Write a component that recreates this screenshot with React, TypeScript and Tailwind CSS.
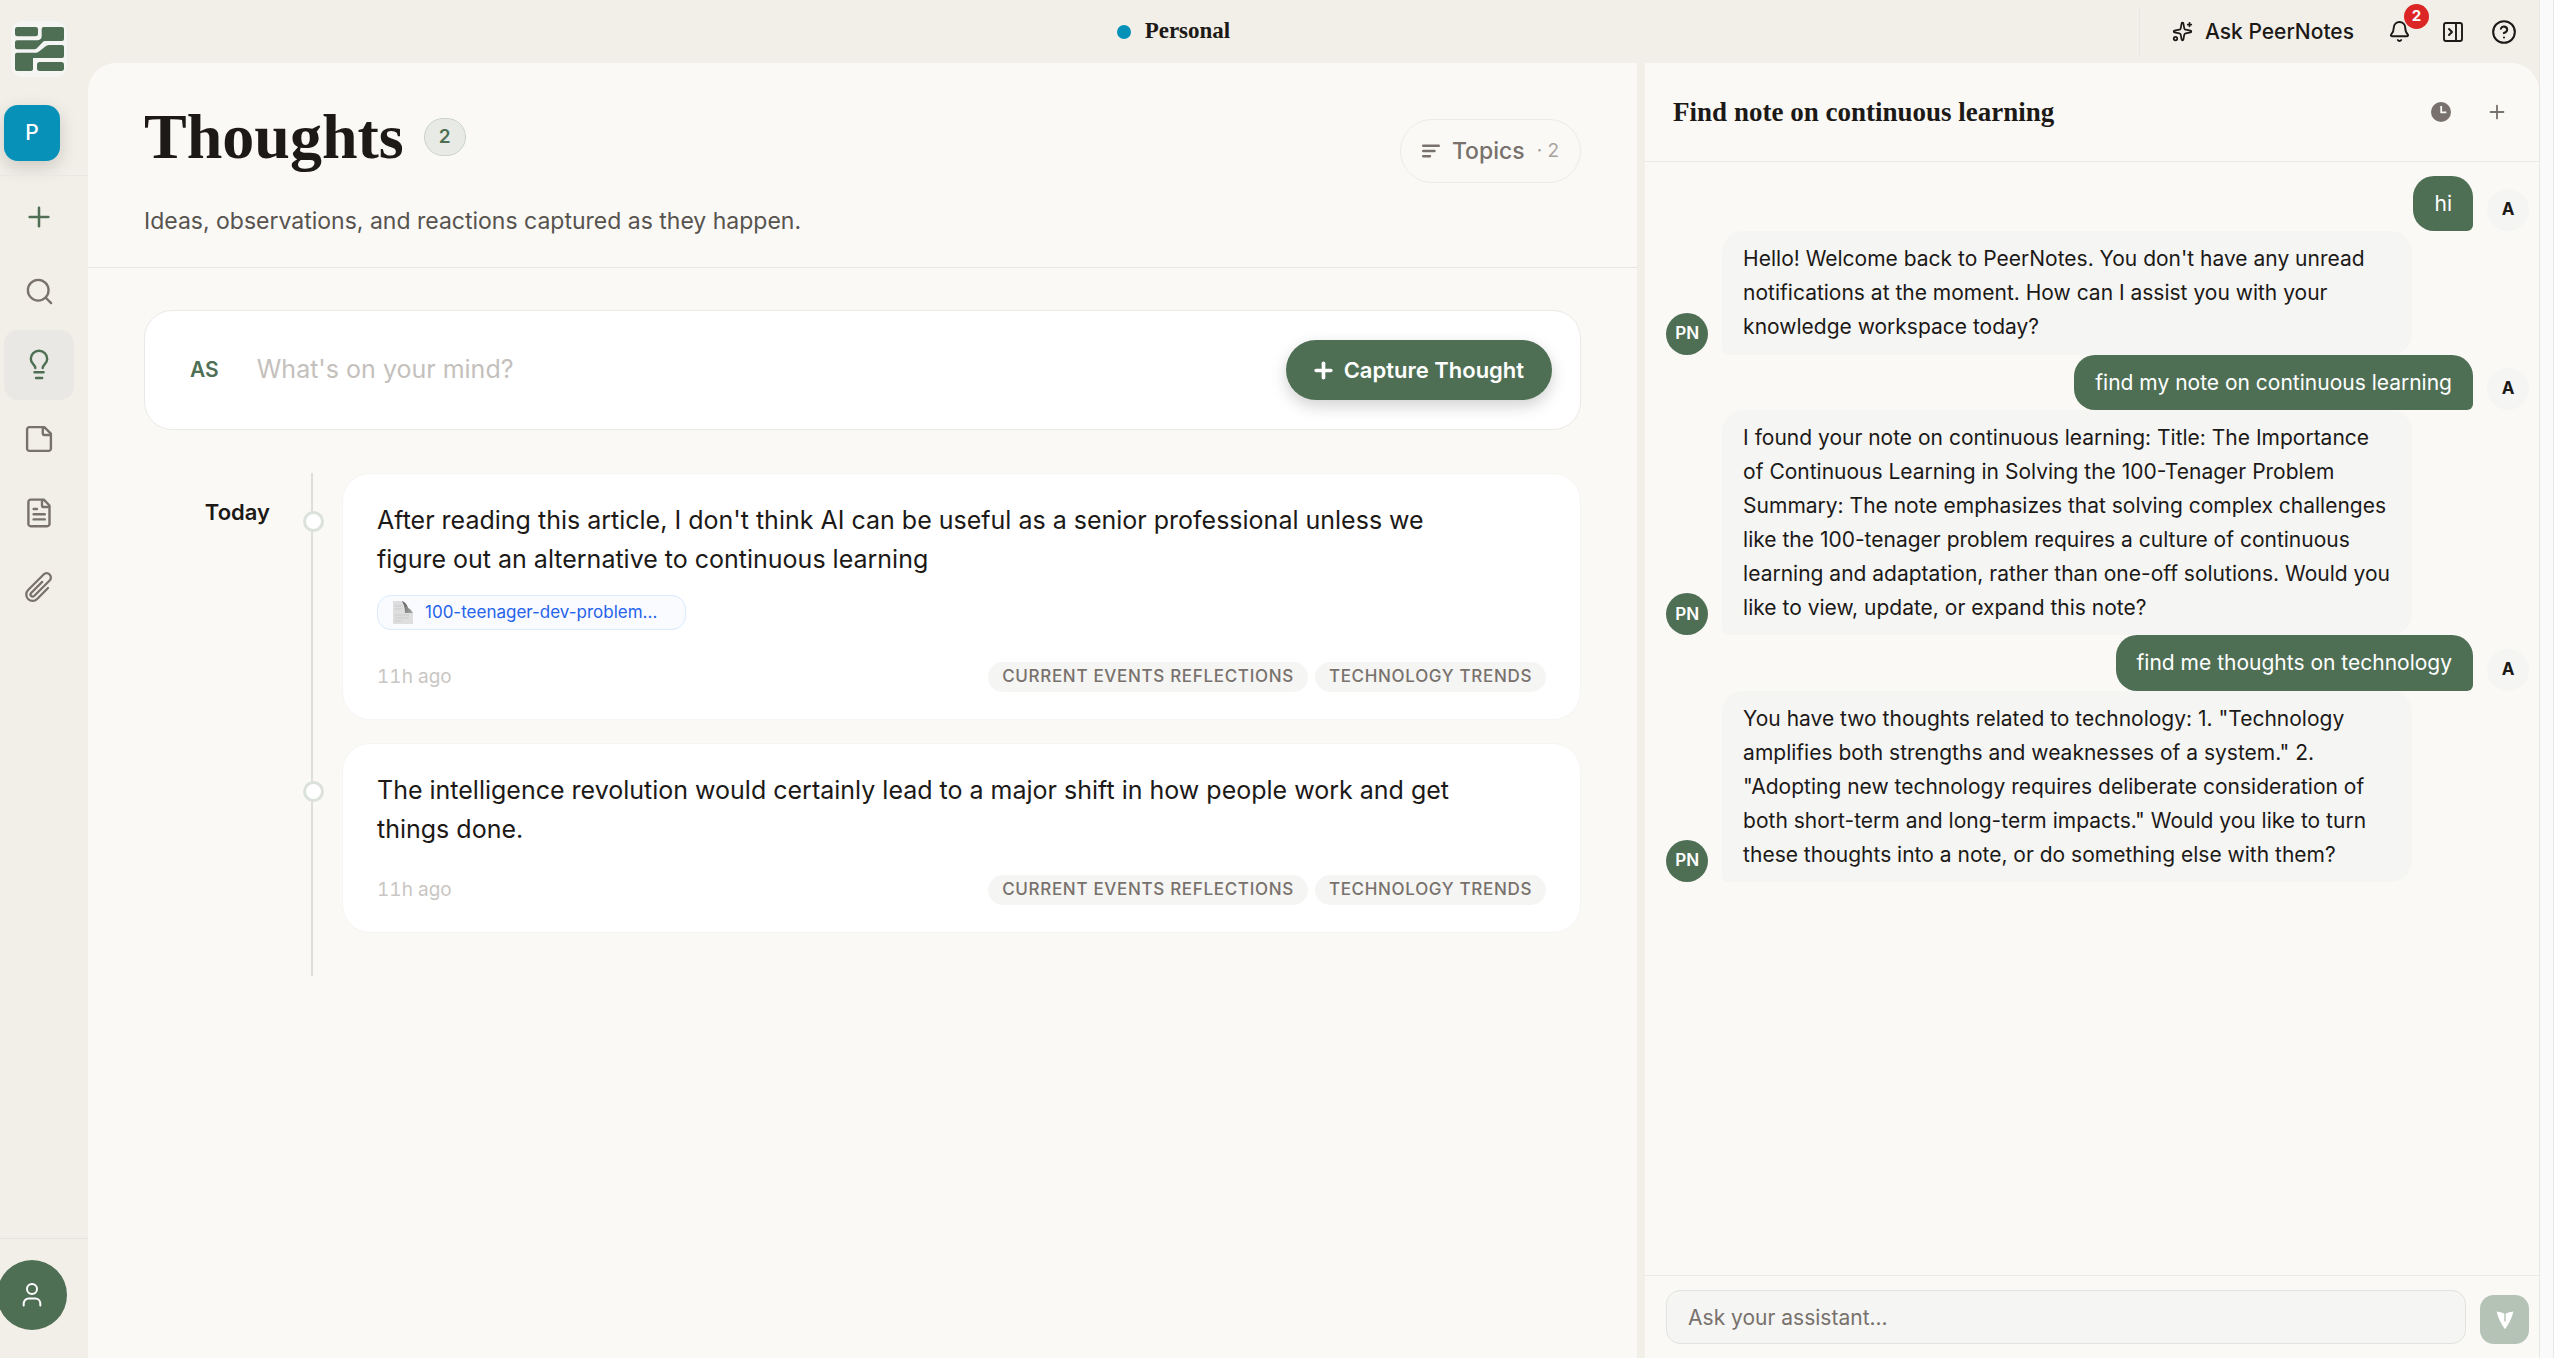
import { useState } from 'react';
import type { ReactNode } from 'react';
import { Bell, CircleHelp, PanelRightClose, Plus, Search, Sparkles } from 'lucide-react';
import clsx from 'clsx';

interface Thought {
  id: number;
  text: string;
  attachment?: string;
  time: string;
  topics: string[];
}

interface Message {
  id: number;
  from: 'user' | 'assistant';
  text: string;
}

const THOUGHTS: Thought[] = [
  {
    id: 1,
    text: "After reading this article, I don't think AI can be useful as a senior professional unless we figure out an alternative to continuous learning",
    attachment: '100-teenager-dev-problem...',
    time: '11h ago',
    topics: ['Current Events Reflections', 'Technology Trends'],
  },
  {
    id: 2,
    text: 'The intelligence revolution would certainly lead to a major shift in how people work and get things done.',
    time: '11h ago',
    topics: ['Current Events Reflections', 'Technology Trends'],
  },
];

const MESSAGES: Message[] = [
  { id: 1, from: 'user', text: 'hi' },
  {
    id: 2,
    from: 'assistant',
    text: "Hello! Welcome back to PeerNotes. You don't have any unread notifications at the moment. How can I assist you with your knowledge workspace today?",
  },
  { id: 3, from: 'user', text: 'find my note on continuous learning' },
  {
    id: 4,
    from: 'assistant',
    text: 'I found your note on continuous learning: Title: The Importance of Continuous Learning in Solving the 100-Tenager Problem Summary: The note emphasizes that solving complex challenges like the 100-tenager problem requires a culture of continuous learning and adaptation, rather than one-off solutions. Would you like to view, update, or expand this note?',
  },
  { id: 5, from: 'user', text: 'find me thoughts on technology' },
  {
    id: 6,
    from: 'assistant',
    text: 'You have two thoughts related to technology: 1. "Technology amplifies both strengths and weaknesses of a system." 2. "Adopting new technology requires deliberate consideration of both short-term and long-term impacts." Would you like to turn these thoughts into a note, or do something else with them?',
  },
];

function Logo() {
  return (
    <svg viewBox="0 0 168 168" className="size-14" fill="#4f6f55" aria-hidden="true">
      <rect x="12" y="18" width="69" height="28" rx="7" />
      <path d="M98 18H153q6 0 6 6V54q0 6-6 6H102q-4 0-7 4L79 80q-4 5-10 5H18q-6 0-6-6V64q0-6 6-6H80q12-2 12-12V24q0-6 6-6z" />
      <path d="M114 72H153q6 0 6 6V105q0 6-6 6H66V144q0 6-6 6H18q-6 0-6-6V101q0-6 6-6H76q5 0 9-4L102 77q5-5 12-5z" />
      <rect x="78" y="123" width="81" height="27" rx="8" />
    </svg>
  );
}

function StrokeIcon({ children }: { children: ReactNode }) {
  return (
    <svg
      viewBox="0 0 34 34"
      className="size-[34px]"
      fill="none"
      stroke="currentColor"
      strokeWidth="2.4"
      strokeLinecap="round"
      strokeLinejoin="round"
      aria-hidden="true"
    >
      {children}
    </svg>
  );
}

const NAV_ITEMS = [
  { label: 'Create', icon: <Plus className="size-8 text-[#4f6f55]" strokeWidth={1.9} /> },
  { label: 'Search', icon: <Search className="size-[31px]" strokeWidth={1.8} /> },
  {
    label: 'Thoughts',
    icon: (
      <StrokeIcon>
        <path d="M13.3 20C13.3 16.6 8.8 16 8.8 11A8.2 8.2 0 0 1 25.2 11C25.2 16 20.7 16.6 20.7 20M12.5 24.3H21.6M14 30H20.2" />
      </StrokeIcon>
    ),
  },
  {
    label: 'Notes',
    icon: (
      <StrokeIcon>
        <path d="M22.3 5.1H7.4a2.3 2.3 0 0 0-2.3 2.3V26.6a2.3 2.3 0 0 0 2.3 2.3H26.6a2.3 2.3 0 0 0 2.3-2.3V11.7zM20.8 5.1V11.6a1.4 1.4 0 0 0 1.4 1.4H28.9" />
      </StrokeIcon>
    ),
  },
  {
    label: 'Documents',
    icon: (
      <StrokeIcon>
        <path d="M21.8 3.6H8.7a2.3 2.3 0 0 0-2.3 2.3V27.9a2.3 2.3 0 0 0 2.3 2.3H25.2a2.3 2.3 0 0 0 2.3-2.3V9.5zM20 3.6V9.4a1.6 1.6 0 0 0 1.6 1.6H27.5M11.6 13H15M11.6 18.2H22.8M11.6 23.4H22.8" />
      </StrokeIcon>
    ),
  },
  {
    label: 'Attachments',
    icon: (
      <svg
        viewBox="0 0 24 24"
        className="size-[34px]"
        fill="none"
        stroke="currentColor"
        strokeWidth="1.6"
        strokeLinecap="round"
        strokeLinejoin="round"
        aria-hidden="true"
      >
        <path d="m18.375 12.739-7.693 7.693a4.5 4.5 0 0 1-6.364-6.364l10.94-10.94A3 3 0 1 1 19.5 7.372L8.552 18.32m5.699-9.941-7.81 7.81a1.5 1.5 0 0 0 2.112 2.13" />
      </svg>
    ),
  },
];

function Sidebar() {
  return (
    <aside className="flex w-[88px] shrink-0 flex-col pt-[21px]">
      <a
        href="#home"
        aria-label="Home"
        className="ml-[11px] size-14 overflow-hidden rounded-xl bg-[#f5f5f4]"
      >
        <Logo />
      </a>
      <button
        type="button"
        aria-label="Personal workspace"
        className="mt-7 ml-1 flex size-14 items-center justify-center rounded-[14px] bg-[#0891b8] text-[21px] font-medium text-white shadow-[0_6px_18px_rgba(0,0,0,0.16)]"
      >
        P
      </button>
      <div className="mt-[14px] border-t border-[#e9e7e2]" />
      <nav className="mt-1.5 ml-1 flex flex-col gap-1">
        {NAV_ITEMS.map((item) => (
          <button
            key={item.label}
            type="button"
            aria-label={item.label}
            className={clsx(
              'flex size-[70px] items-center justify-center rounded-[14px]',
              item.label === 'Thoughts' ? 'bg-[#e9e8e4] text-[#4f6f55]' : 'text-[#78716c]',
            )}
          >
            {item.icon}
          </button>
        ))}
      </nav>
      <div className="mt-auto border-t border-[#e5e4e0] py-[21px] pb-7">
        <button
          type="button"
          aria-label="Account"
          className="-ml-[3px] flex size-[70px] items-center justify-center rounded-full bg-[#4f6f55] text-white"
        >
          <svg
            viewBox="0 0 24 24"
            className="size-6"
            fill="none"
            stroke="currentColor"
            strokeWidth="2"
            strokeLinecap="round"
            aria-hidden="true"
          >
            <circle cx="12" cy="6" r="5" />
            <path d="M3.7 22.5v-2a5 5 0 0 1 5-5h6.6a5 5 0 0 1 5 5v2" />
          </svg>
        </button>
      </div>
    </aside>
  );
}

function TopBar() {
  return (
    <header className="flex h-[63px] shrink-0 items-center pl-[120px] text-[#1c1917]">
      <div className="flex flex-1 items-center justify-center gap-[14px]">
        <span className="size-[14px] rounded-full bg-[#0891b8]" />
        <span className="font-['Liberation_Serif',serif] text-[23px] font-bold">Personal</span>
      </div>
      <div className="flex h-[49px] items-center border-l border-[#e9e7e2] pr-[22px] pl-8">
        <button type="button" className="flex items-center gap-3 text-[21px] font-medium">
          <Sparkles className="size-[21px]" />
          Ask PeerNotes
        </button>
        <button type="button" aria-label="Notifications, 2 unread" className="relative ml-[34px]">
          <Bell className="size-[23px]" />
          <span className="absolute -top-4 left-4 flex size-[25px] items-center justify-center rounded-full bg-[#dc2626] text-[15px] font-bold text-white">
            2
          </span>
        </button>
        <button type="button" aria-label="Toggle panel" className="ml-[30px]">
          <PanelRightClose className="size-[24px]" strokeWidth={1.9} />
        </button>
        <button type="button" aria-label="Help" className="ml-[26px]">
          <CircleHelp className="size-[26px]" strokeWidth={1.9} />
        </button>
      </div>
    </header>
  );
}

function FileGlyph() {
  return (
    <svg viewBox="0 0 20 24" className="h-6 w-5" aria-hidden="true">
      <defs>
        <linearGradient id="fold" x1="0" y1="0" x2="1" y2="1">
          <stop offset="0" stopColor="#555" />
          <stop offset="1" stopColor="#aaa" />
        </linearGradient>
      </defs>
      <path d="M0 0H10L20 12V23H0z" fill="#dedede" />
      <path d="M9 0Q12 5 12 12H20Q18 8 15 7Q14 2 9 0z" fill="url(#fold)" />
      <path d="M2 5H9M2 8H9M2 14H16M2 17H16M2 20H8" stroke="#cbcbcb" strokeWidth="1" />
    </svg>
  );
}

function ThoughtCard({ thought }: { thought: Thought }) {
  return (
    <li className="flex">
      <div className="relative z-10 mt-[38px] -ml-[10px] size-[21px] shrink-0 rounded-full border-[3px] border-[#dbe2dc] bg-white" />
      <article className="ml-[18px] min-w-0 flex-1 rounded-[28px] border border-[#f5f5f4] bg-white px-[34px] py-[27px]">
        <p className="max-w-[1090px] text-[25px] leading-[39px] text-[#1c1917]">{thought.text}</p>
        {thought.attachment && (
          <a
            href="#attachment"
            className="mt-4 flex h-[35px] w-[309px] items-center gap-3 rounded-[14px] border border-[#dbeafe] bg-[#f9fbff] pl-[15px] text-[17px] text-[#2563eb]"
          >
            <FileGlyph />
            {thought.attachment}
          </a>
        )}
        <div
          className={clsx(
            'flex items-center justify-between',
            thought.attachment ? 'mt-8' : 'mt-[26px]',
          )}
        >
          <time className="text-[19px] text-[#c9c6c3] tabular-nums">{thought.time}</time>
          <div className="flex gap-[7px]">
            {thought.topics.map((topic) => (
              <span
                key={topic}
                className="flex h-[30px] items-center rounded-full bg-[#f5f5f4] px-[14px] text-[17px] font-medium tracking-[0.04em] text-[#78716c] uppercase"
              >
                {topic}
              </span>
            ))}
          </div>
        </div>
      </article>
    </li>
  );
}

function ThoughtsPanel() {
  const [draft, setDraft] = useState('');

  return (
    <main className="min-w-0 flex-1 rounded-tl-[28px] bg-[#faf9f6]">
      <div className="flex justify-between border-b border-[#e7e6e2] px-14 pt-[35px] pb-7">
        <div>
          <div className="flex items-center gap-5">
            <h1 className="font-['Liberation_Serif',serif] text-[64px] leading-[78px] font-bold text-[#1c1917]">
              Thoughts
            </h1>
            <span className="flex h-[38px] w-[42px] items-center justify-center rounded-full border border-[#cbd4cc] bg-[#e8eae5] text-[19px] font-semibold text-[#4f6f55]">
              2
            </span>
          </div>
          <p className="mt-[27px] text-[23px] leading-9 text-[#57534e]">
            Ideas, observations, and reactions captured as they happen.
          </p>
        </div>
        <button
          type="button"
          className="mt-[21px] flex h-16 items-center rounded-full border border-[#edebe8] px-[21px] text-[23px] font-medium text-[#78716c]"
        >
          <svg
            viewBox="0 0 18 14"
            className="mr-3 h-[14px] w-[18px]"
            stroke="currentColor"
            strokeWidth="2.4"
            strokeLinecap="round"
            aria-hidden="true"
          >
            <path d="M1.2 1.8H16.8M1.2 7H12.5M1.2 12.2H8" />
          </svg>
          Topics
          <span className="ml-3 text-[19px] font-normal text-[#a8a29e]">· 2</span>
        </button>
      </div>

      <div className="px-14 pt-[42px]">
        <form
          onSubmit={(event) => event.preventDefault()}
          className="flex h-[120px] items-center rounded-[28px] border border-[#ebe9e6] bg-white pr-7 pl-[45px]"
        >
          <span className="text-[21px] font-semibold text-[#4f6f55]">AS</span>
          <input
            type="text"
            aria-label="New thought"
            value={draft}
            onChange={(event) => setDraft(event.target.value)}
            placeholder="What's on your mind?"
            className="ml-[38px] min-w-0 flex-1 bg-transparent text-[25px] outline-none placeholder:text-[#c4c0bc]"
          />
          <button
            type="submit"
            className="flex h-[60px] items-center gap-2 rounded-full bg-[#4f6f55] pr-7 pl-[25px] text-[22px] font-semibold text-white shadow-[0_6px_16px_rgba(0,0,0,0.18)]"
          >
            <Plus className="size-[25px]" strokeWidth={3.5} />
            Capture Thought
          </button>
        </form>

        <section className="mt-[43px] flex">
          <h2 className="w-[167px] shrink-0 pt-[25px] pr-[41px] text-right text-[22px] leading-7 font-semibold text-[#1c1917]">
            Today
          </h2>
          <ul className="flex flex-1 flex-col gap-[23px] border-l-2 border-[#dfdfda] pb-[43px]">
            {THOUGHTS.map((thought) => (
              <ThoughtCard key={thought.id} thought={thought} />
            ))}
          </ul>
        </section>
      </div>
    </main>
  );
}

function ChatMessage({ message }: { message: Message }) {
  const isUser = message.from === 'user';

  return (
    <div className={clsx('flex items-end gap-[14px]', isUser && 'flex-row-reverse')}>
      <span
        className={clsx(
          'flex size-[42px] shrink-0 items-center justify-center rounded-full text-[17px]',
          isUser ? 'bg-[#f5f5f4] font-bold text-[#1c1917]' : 'bg-[#4f6f55] font-semibold text-white',
        )}
      >
        {isUser ? 'A' : 'PN'}
      </span>
      <p
        className={clsx(
          'max-w-[80%] rounded-[21px] px-[21px] pt-[11px] pb-[10px] text-[21px] leading-relaxed',
          isUser
            ? 'rounded-br-md bg-[#4f6f55] text-white'
            : 'rounded-bl-md bg-[#f5f5f4] text-[#1c1917]',
        )}
      >
        {message.text}
      </p>
    </div>
  );
}

function AssistantPanel() {
  const [question, setQuestion] = useState('');

  return (
    <aside className="flex w-[35vw] shrink-0 flex-col rounded-tr-[28px] bg-[#faf9f6]">
      <div className="flex h-[99px] shrink-0 items-center border-b border-[#eceae6] pr-[31px] pl-7 text-[#78716c]">
        <h2 className="flex-1 font-['Liberation_Serif',serif] text-[27px] font-bold text-[#1c1917]">
          Find note on continuous learning
        </h2>
        <button type="button" aria-label="Chat history" className="mr-[35px]">
          <svg viewBox="0 0 20 20" className="size-5" aria-hidden="true">
            <circle cx="10" cy="10" r="10" fill="currentColor" />
            <path d="M10.2 4V10.3H15.4" fill="none" stroke="#faf9f6" strokeWidth="1.8" />
          </svg>
        </button>
        <button type="button" aria-label="New chat">
          <Plus className="size-[22px]" strokeWidth={2} />
        </button>
      </div>
      <div className="min-h-0 flex-1 overflow-hidden pt-[14px] pr-[10px] pl-[21px]">
        {MESSAGES.map((message) => (
          <ChatMessage key={message.id} message={message} />
        ))}
      </div>
      <form
        onSubmit={(event) => event.preventDefault()}
        className="flex items-end gap-[14px] border-t border-[#eceae6] py-[14px] pr-[10px] pl-[21px]"
      >
        <input
          type="text"
          aria-label="Ask your assistant"
          value={question}
          onChange={(event) => setQuestion(event.target.value)}
          placeholder="Ask your assistant..."
          className="h-[54px] min-w-0 flex-1 rounded-[14px] border border-[#e2e2e0] bg-[#f5f5f4] px-[21px] text-[21px] outline-none placeholder:text-[#78716c]"
        />
        <button
          type="submit"
          aria-label="Send"
          className="flex size-[49px] items-center justify-center rounded-[14px] bg-[#b5c2b6]"
        >
          <svg viewBox="0 0 18 18" className="size-[18px]" fill="#fff" aria-hidden="true">
            <path d="M0.6 0.4Q5 1 8.3 2.6V10.4H9.7V2.6Q13 1 17.4 0.4Q15.5 9 9.6 17.4Q9 18.2 8.4 17.4Q2.5 9 0.6 0.4z" />
          </svg>
        </button>
      </form>
    </aside>
  );
}

export default function App() {
  return (
    <div className="flex h-screen overflow-hidden bg-[#f2efe8] font-['Inter',sans-serif]">
      <Sidebar />
      <div className="flex min-w-0 flex-1 flex-col">
        <TopBar />
        <div className="flex min-h-0 flex-1 gap-2">
          <ThoughtsPanel />
          <AssistantPanel />
        </div>
      </div>
      <div className="w-[15px] shrink-0 border-x border-[#e8e8e8] bg-[#fafafa]" />
    </div>
  );
}
